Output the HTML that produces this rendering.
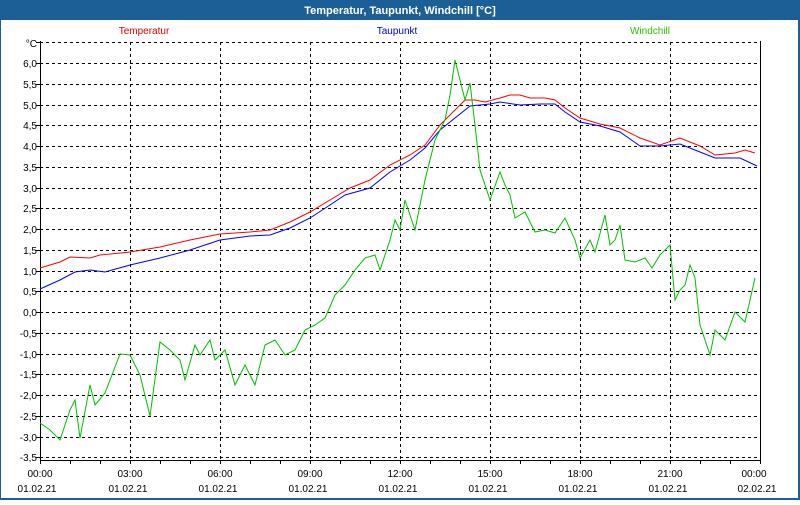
<!DOCTYPE html>
<html><head><meta charset="utf-8"><style>
body{margin:0;width:800px;height:500px;overflow:hidden;background:#fff;font-family:"Liberation Sans",sans-serif}
</style></head><body>
<svg width="800" height="500" xmlns="http://www.w3.org/2000/svg" font-family="Liberation Sans, sans-serif" font-size="10">
<rect x="0" y="0" width="800" height="500" fill="#1c5f96"/>
<rect x="1" y="20" width="797" height="478" fill="#fff"/>
<text x="400" y="14" fill="#fff" font-weight="bold" font-size="11" text-anchor="middle">Temperatur, Taupunkt, Windchill [°C]</text>
<text x="144" y="34" fill="#e00000" text-anchor="middle">Temperatur</text>
<text x="397" y="34" fill="#0000d0" text-anchor="middle">Taupunkt</text>
<text x="650" y="34" fill="#30c000" text-anchor="middle">Windchill</text>
<g stroke="#000" stroke-dasharray="3,3" stroke-width="1">
<path d="M40 42.5H760M40 63.5H760M40 84.5H760M40 105.5H760M40 125.5H760M40 146.5H760M40 167.5H760M40 188.5H760M40 208.5H760M40 229.5H760M40 250.5H760M40 271.5H760M40 291.5H760M40 312.5H760M40 333.5H760M40 354.5H760M40 374.5H760M40 395.5H760M40 416.5H760M40 437.5H760M40 457.5H760"/>
<path d="M130.5 42V460M220.5 42V460M310.5 42V460M400.5 42V460M490.5 42V460M580.5 42V460M670.5 42V460"/>
</g>
<path d="M40.5 41V464M40 460.5H760.5M760.5 41V461" stroke="#000" fill="none"/>
<path d="M70.5 460v4M100.5 460v4M130.5 460v4M160.5 460v4M190.5 460v4M220.5 460v4M250.5 460v4M280.5 460v4M310.5 460v4M340.5 460v4M370.5 460v4M400.5 460v4M430.5 460v4M460.5 460v4M490.5 460v4M520.5 460v4M550.5 460v4M580.5 460v4M610.5 460v4M640.5 460v4M670.5 460v4M700.5 460v4M730.5 460v4M760.5 460v4M36 42.5h4M36 63.5h4M36 84.5h4M36 105.5h4M36 125.5h4M36 146.5h4M36 167.5h4M36 188.5h4M36 208.5h4M36 229.5h4M36 250.5h4M36 271.5h4M36 291.5h4M36 312.5h4M36 333.5h4M36 354.5h4M36 374.5h4M36 395.5h4M36 416.5h4M36 437.5h4M36 457.5h4" stroke="#000"/>
<g text-anchor="end" fill="#000" font-size="10">
<text x="37" y="47">°C</text><text x="37" y="67">6,0</text><text x="37" y="88">5,5</text><text x="37" y="109">5,0</text><text x="37" y="129">4,5</text><text x="37" y="150">4,0</text><text x="37" y="171">3,5</text><text x="37" y="192">3,0</text><text x="37" y="212">2,5</text><text x="37" y="233">2,0</text><text x="37" y="254">1,5</text><text x="37" y="275">1,0</text><text x="37" y="295">0,5</text><text x="37" y="316">0,0</text><text x="37" y="337">-0,5</text><text x="37" y="358">-1,0</text><text x="37" y="378">-1,5</text><text x="37" y="399">-2,0</text><text x="37" y="420">-2,5</text><text x="37" y="441">-3,0</text><text x="37" y="461">-3,5</text>
</g>
<g text-anchor="middle" fill="#000" font-size="10">
<text x="40" y="477">00:00</text><text x="130" y="477">03:00</text><text x="220" y="477">06:00</text><text x="310" y="477">09:00</text><text x="400" y="477">12:00</text><text x="490" y="477">15:00</text><text x="580" y="477">18:00</text><text x="670" y="477">21:00</text><text x="754" y="477">00:00</text>
<text x="37" y="492">01.02.21</text><text x="128" y="492">01.02.21</text><text x="218" y="492">01.02.21</text><text x="308" y="492">01.02.21</text><text x="398" y="492">01.02.21</text><text x="488" y="492">01.02.21</text><text x="578" y="492">01.02.21</text><text x="668" y="492">01.02.21</text><text x="757" y="492">02.02.21</text>
</g>
<polyline fill="none" stroke="#ff0000" points="40,268 60,262 70,257 90,258 100,255 130,252 160,247 190,240 220,234 250,232 270,230 290,222 310,212 330,200 350,188 370,180 390,165 410,155 425,145 440,125 455,110 465,100 475,100 485,102 500,98 510,95 520,95 530,98 545,98 555,100 565,108 580,118 600,124 620,128 640,138 660,145 680,138 700,146 715,155 735,153 745,150 755,153"/>
<polyline fill="none" stroke="#0000ff" points="40,289 60,280 75,272 90,270 105,272 130,265 160,258 190,250 220,240 250,236 270,235 290,228 310,218 330,205 345,195 370,188 390,172 410,160 425,148 440,130 455,118 470,106 480,105 490,104 500,102 520,105 540,104 555,104 565,112 580,122 600,126 620,132 640,146 660,146 680,144 700,152 715,158 740,158 757,166"/>
<polyline fill="none" stroke="#00c000" points="40,423 50,430 60,440 70,410 75,400 80,438 90,385 95,405 105,393 110,380 120,354 130,355 140,375 150,416 160,342 170,350 180,360 185,380 195,345 200,355 210,340 215,360 225,350 235,385 245,365 255,385 265,345 275,340 285,355 295,350 305,330 315,325 325,318 335,295 345,285 355,270 365,258 375,255 380,270 390,240 395,220 400,230 405,200 410,215 415,230 425,180 430,160 435,140 440,130 445,120 450,95 455,60 460,80 465,100 470,83 475,125 480,170 490,200 500,172 505,185 510,195 515,218 525,212 535,232 545,230 555,233 565,218 575,240 580,258 590,240 595,252 605,215 610,245 615,240 620,225 625,260 635,262 645,258 652,268 660,255 670,245 675,300 680,290 685,285 690,265 695,278 700,325 705,340 710,355 715,330 725,340 735,312 745,322 755,278"/>
</svg>
</body></html>
